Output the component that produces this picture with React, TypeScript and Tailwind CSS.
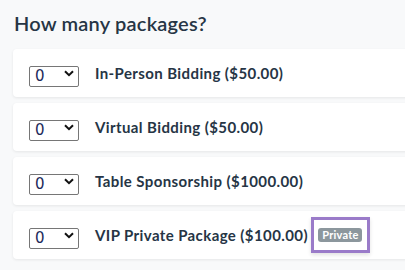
const packages = [
  { name: 'In-Person Bidding ($50.00)' },
  { name: 'Virtual Bidding ($50.00)' },
  { name: 'Table Sponsorship ($1000.00)' },
  { name: 'VIP Private Package ($100.00)', isPrivate: true },
];

function QtySelect() {
  return (
    <div className="relative w-[50px] h-[21px] shrink-0">
      <select
        defaultValue="0"
        className="w-full h-full appearance-none border border-[#767676] rounded-[2px] bg-white pl-[5px] text-[15px] leading-none text-[#1c2a5a] outline-none"
        style={{ fontFamily: '"DejaVu Sans", sans-serif' }}
      >
        {[0, 1, 2, 3, 4, 5].map((n) => (
          <option key={n} value={n}>
            {n}
          </option>
        ))}
      </select>
      <svg
        className="pointer-events-none absolute right-[5px] top-[7px]"
        width="10"
        height="7"
        viewBox="0 0 10 7"
      >
        <path d="M1 1.2 5 5.2 9 1.2" fill="none" stroke="#111" strokeWidth="2" />
      </svg>
    </div>
  );
}

export default function App() {
  return (
    <div
      className="min-h-[270px] w-[405px] overflow-hidden bg-[#f8f9fa] pl-[13px] pt-[8px]"
      style={{ fontFamily: 'Lato, "Liberation Sans", sans-serif' }}
    >
      <h2 className="pl-px text-[20px] font-semibold leading-[30px] tracking-[0.2px] text-[#263545]">
        How many packages?
      </h2>
      <div className="mt-[11px] flex w-[420px] flex-col gap-[6px]">
        {packages.map((p) => (
          <div
            key={p.name}
            className="flex h-[48px] items-center rounded-[4px] bg-white pl-[16px] shadow-[0_1px_3px_rgba(0,0,0,0.08)]"
          >
            <QtySelect />
            <span className="ml-[16px] text-[15px] font-bold tracking-[0.4px] text-[#263545]">
              {p.name}
            </span>
            {p.isPrivate && (
              <div className="ml-[3px] flex h-[36px] w-[59px] items-center justify-center border-[3px] border-[#9a7bc9] shadow-[0_2px_4px_rgba(0,0,0,0.12)]">
                <span className="rounded-[3px] bg-[#8c979d] px-[4px] py-[1px] text-[11px] font-bold leading-[12px] tracking-[0.2px] text-white">
                  Private
                </span>
              </div>
            )}
          </div>
        ))}
      </div>
    </div>
  );
}
